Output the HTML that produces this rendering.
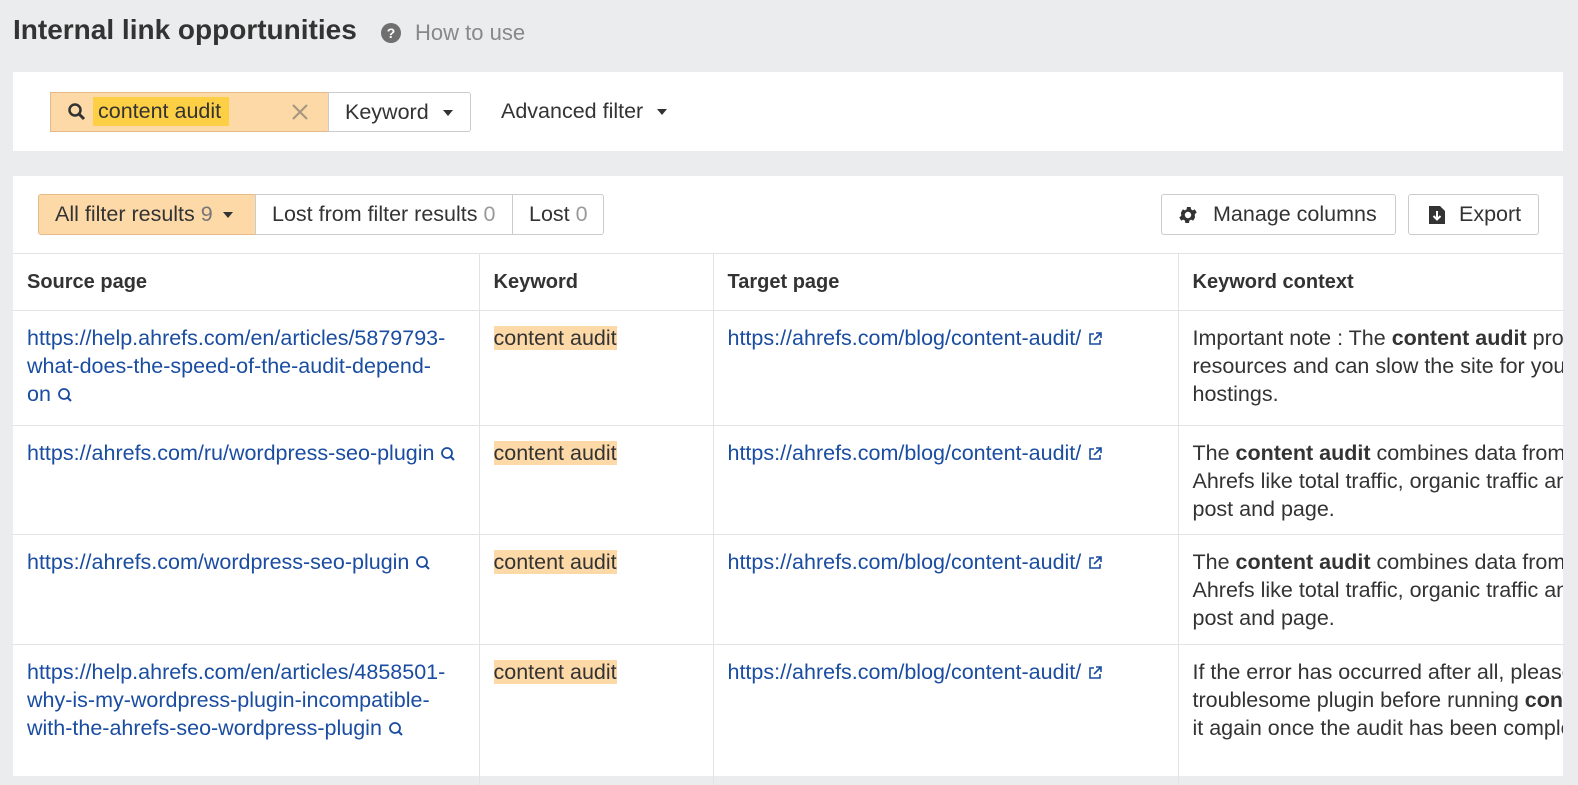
<!DOCTYPE html><html><head><style>
body{margin:0;width:1578px;height:760px;overflow:hidden;background:#ebecee;font-family:"Liberation Sans",sans-serif;color:#333;position:relative}
.a{position:absolute}
h1{position:absolute;left:13px;top:14px;margin:0;font-size:28px;font-weight:bold;color:#333}
.panel{background:#fff;position:absolute;left:13px;width:1550px}
.btn{position:absolute;border:1px solid #ccc;border-radius:3px;font-size:21.5px;box-sizing:border-box;background:#fff;line-height:38px;white-space:nowrap}
.tri{display:inline-block;width:0;height:0;border-left:5px solid transparent;border-right:5px solid transparent;border-top:6px solid #333;vertical-align:middle;margin-left:10px}
table{border-collapse:collapse;position:absolute;left:0;top:77px;width:1550px;table-layout:fixed;font-size:21.5px}
td,th{border-top:1px solid #e3e3e3;border-left:1px solid #e3e3e3;padding:0 14px;vertical-align:top;text-align:left;line-height:28px}
td:first-child,th:first-child{border-left:none}
th{height:56px;vertical-align:middle;font-weight:bold;font-size:20px;color:#333}
td{padding-top:13px;padding-bottom:10px}
a{color:#1a4da1;text-decoration:none}
.hl{background:#fdd9a8}
.ctx{white-space:nowrap;overflow:hidden}
svg{vertical-align:middle}
</style></head><body>
<h1>Internal link opportunities</h1>
<div class="a" style="left:381px;top:23px;width:20px;height:20px;border-radius:50%;background:#6f6f6f;color:#fff;font-size:14px;font-weight:bold;text-align:center;line-height:20px">?</div>
<div class="a" style="left:415px;top:20px;font-size:22px;color:#888">How to use</div>
<div class="panel" style="top:72px;height:79px">
<div class="a" style="left:37px;top:20px;width:279px;height:40px;background:#fdd9a8;border:1px solid #e6b98a;box-sizing:border-box"></div>
<svg class="a" style="left:54px;top:30px" width="20" height="20" viewBox="0 0 20 20"><circle cx="8" cy="8" r="5.5" fill="none" stroke="#333" stroke-width="2.5"/><line x1="12" y1="12" x2="17" y2="17" stroke="#333" stroke-width="3"/></svg>
<div class="a" style="left:80px;top:25px;height:29px;width:136px;background:#fdcf44;font-size:21.5px;line-height:29px;padding-left:5px;box-sizing:border-box;white-space:nowrap">content audit</div>
<svg class="a" style="left:277px;top:30px" width="20" height="20"><path d="M3 3L17 17M17 3L3 17" stroke="#a89880" stroke-width="2.2"/></svg>
<div class="btn" style="left:315px;top:20px;width:143px;height:40px;padding-left:16px;border-radius:0 3px 3px 0">Keyword<span class="tri" style="margin-left:14px"></span></div>
<div class="a" style="left:488px;top:27px;font-size:21.5px">Advanced filter<span class="tri" style="margin-left:14px"></span></div>
</div>
<div class="panel" style="top:176px;height:600px">
<div class="btn" style="left:25px;top:18px;width:218px;height:41px;background:#fdd9a8;border-color:#e6b98a;padding-left:16px;border-radius:3px 0 0 3px">All filter results <span style="color:#777">9</span><span class="tri"></span></div>
<div class="btn" style="left:242px;top:18px;width:258px;height:41px;padding-left:16px;border-radius:0">Lost from filter results <span style="color:#999">0</span></div>
<div class="btn" style="left:499px;top:18px;width:92px;height:41px;padding-left:16px;border-radius:0 3px 3px 0">Lost <span style="color:#999">0</span></div>
<div class="btn" style="left:1148px;top:18px;width:235px;height:41px;padding-left:51px">Manage columns</div>
<svg class="a" style="left:1164px;top:28px" width="22" height="22" viewBox="0 0 24 24"><path fill="#333" d="M19.4 13a7.5 7.5 0 000-2l2.1-1.6-2-3.5-2.5 1a7 7 0 00-1.7-1l-.4-2.6h-4l-.4 2.6a7 7 0 00-1.7 1l-2.5-1-2 3.5L4.6 11a7.5 7.5 0 000 2l-2.1 1.6 2 3.5 2.5-1a7 7 0 001.7 1l.4 2.6h4l.4-2.6a7 7 0 001.7-1l2.5 1 2-3.5zM12 15.5a3.5 3.5 0 110-7 3.5 3.5 0 010 7z"/></svg>
<div class="btn" style="left:1395px;top:18px;width:131px;height:41px;padding-left:50px">Export</div>
<svg class="a" style="left:1414px;top:28px" width="20" height="22" viewBox="0 0 20 22"><path fill="#333" d="M2 2h11l5 5v13H2z"/><path d="M10 7v8M6.5 12l3.5 3.5 3.5-3.5" stroke="#fff" stroke-width="2" fill="none"/></svg>
<table>
<colgroup><col style="width:466px"><col style="width:234px"><col style="width:465px"><col style="width:385px"></colgroup>
<tr><th>Source page</th><th>Keyword</th><th>Target page</th><th>Keyword context</th></tr>
<tr style="height:115px"><td><a>https://help.ahrefs.com/en/articles/5879793-<br>what-does-the-speed-of-the-audit-depend-<br>on</a> <svg width="16" height="16"><circle cx="7" cy="7" r="5" fill="none" stroke="#1a4da1" stroke-width="1.8"/><line x1="10.5" y1="10.5" x2="14" y2="14" stroke="#1a4da1" stroke-width="2"/></svg></td><td><span class="hl">content audit</span></td><td><a>https://ahrefs.com/blog/content-audit/</a> <svg width="16" height="16"><path d="M7 3H3v10h10V9M9 2h5v5M14 2L7 9" fill="none" stroke="#1a4da1" stroke-width="1.6"/></svg></td><td class="ctx">Important note : The <b>content audit</b> process<br>resources and can slow the site for your<br>hostings.</td></tr>
<tr style="height:109px"><td><a>https://ahrefs.com/ru/wordpress-seo-plugin</a> <svg width="16" height="16"><circle cx="7" cy="7" r="5" fill="none" stroke="#1a4da1" stroke-width="1.8"/><line x1="10.5" y1="10.5" x2="14" y2="14" stroke="#1a4da1" stroke-width="2"/></svg></td><td><span class="hl">content audit</span></td><td><a>https://ahrefs.com/blog/content-audit/</a> <svg width="16" height="16"><path d="M7 3H3v10h10V9M9 2h5v5M14 2L7 9" fill="none" stroke="#1a4da1" stroke-width="1.6"/></svg></td><td class="ctx">The <b>content audit</b> combines data from<br>Ahrefs like total traffic, organic traffic and<br>post and page.</td></tr>
<tr style="height:110px"><td><a>https://ahrefs.com/wordpress-seo-plugin</a> <svg width="16" height="16"><circle cx="7" cy="7" r="5" fill="none" stroke="#1a4da1" stroke-width="1.8"/><line x1="10.5" y1="10.5" x2="14" y2="14" stroke="#1a4da1" stroke-width="2"/></svg></td><td><span class="hl">content audit</span></td><td><a>https://ahrefs.com/blog/content-audit/</a> <svg width="16" height="16"><path d="M7 3H3v10h10V9M9 2h5v5M14 2L7 9" fill="none" stroke="#1a4da1" stroke-width="1.6"/></svg></td><td class="ctx">The <b>content audit</b> combines data from<br>Ahrefs like total traffic, organic traffic and<br>post and page.</td></tr>
<tr style="height:140px"><td><a>https://help.ahrefs.com/en/articles/4858501-<br>why-is-my-wordpress-plugin-incompatible-<br>with-the-ahrefs-seo-wordpress-plugin</a> <svg width="16" height="16"><circle cx="7" cy="7" r="5" fill="none" stroke="#1a4da1" stroke-width="1.8"/><line x1="10.5" y1="10.5" x2="14" y2="14" stroke="#1a4da1" stroke-width="2"/></svg></td><td><span class="hl">content audit</span></td><td><a>https://ahrefs.com/blog/content-audit/</a> <svg width="16" height="16"><path d="M7 3H3v10h10V9M9 2h5v5M14 2L7 9" fill="none" stroke="#1a4da1" stroke-width="1.6"/></svg></td><td class="ctx">If the error has occurred after all, please<br>troublesome plugin before running <b>content</b><br>it again once the audit has been completed</td></tr>
</table>
</div>
</body></html>
